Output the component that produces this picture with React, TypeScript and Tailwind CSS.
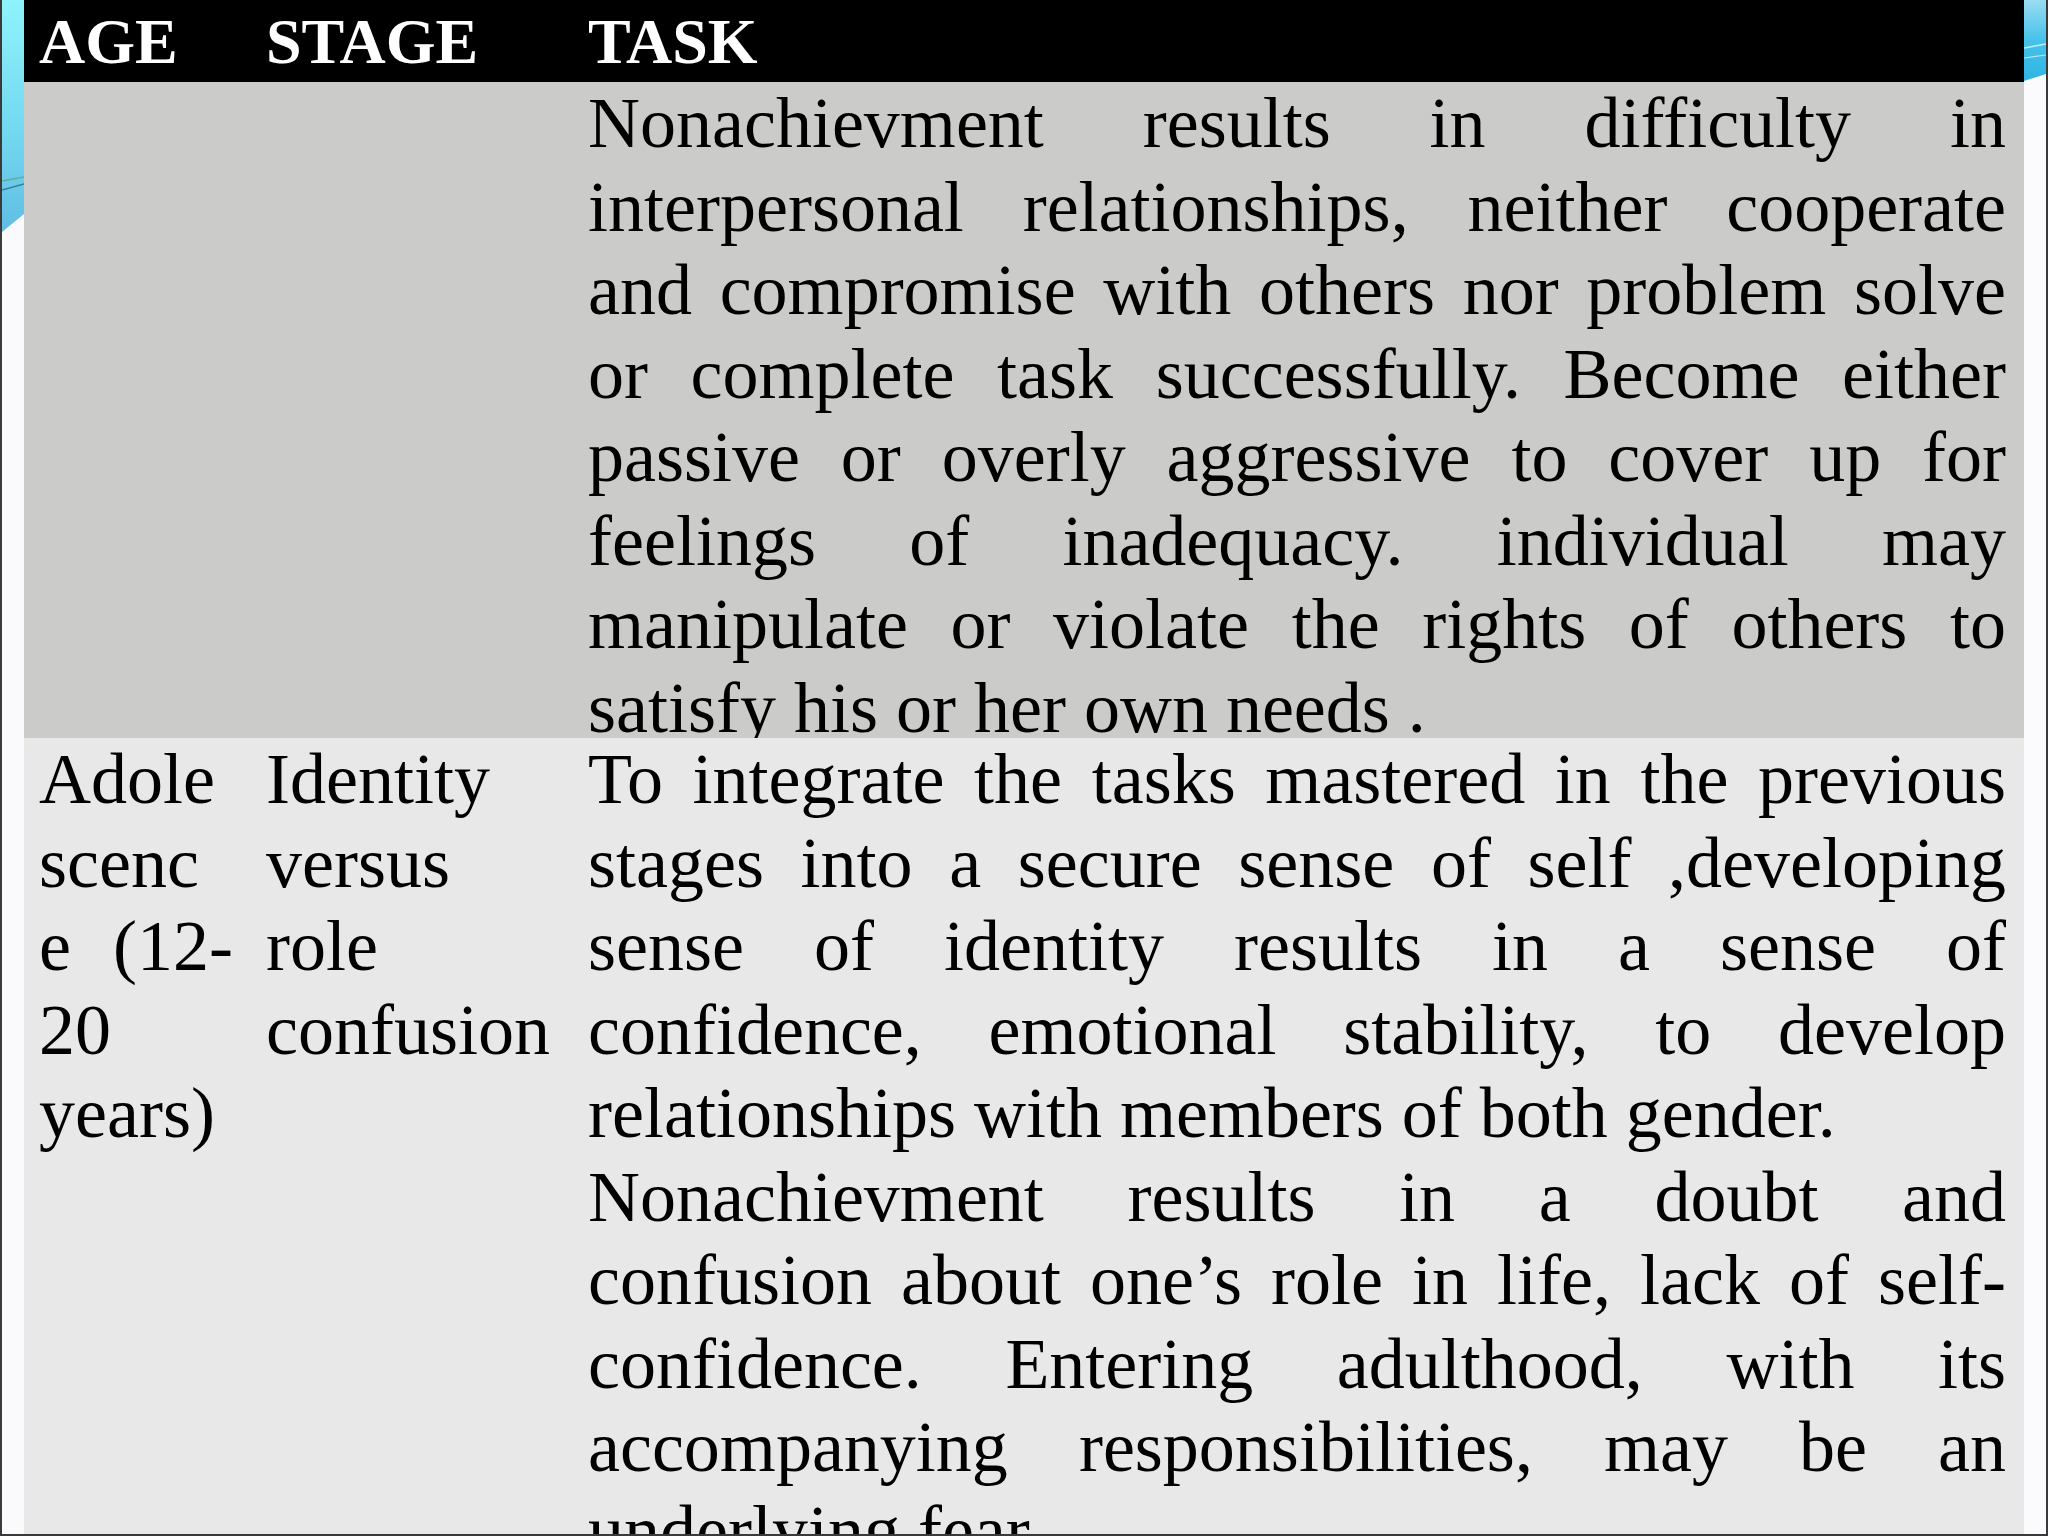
import React from "react";

const J = "text-justify [text-align-last:justify]";

type Line = { t: string; j?: boolean };

const row1Task: Line[] = [
  { t: "Nonachievment results in difficulty in", j: true },
  { t: "interpersonal relationships, neither cooperate", j: true },
  { t: "and compromise with others nor problem solve", j: true },
  { t: "or complete task successfully. Become either", j: true },
  { t: "passive or overly aggressive to cover up for", j: true },
  { t: "feelings of inadequacy. individual may", j: true },
  { t: "manipulate or violate the rights of others to", j: true },
  { t: "satisfy his or her own needs ." },
];

const row2Task: Line[] = [
  { t: "To integrate the tasks mastered in the previous", j: true },
  { t: "stages into  a secure sense of self ,developing", j: true },
  { t: "sense of identity results in a sense of", j: true },
  { t: "confidence, emotional stability, to develop", j: true },
  { t: "relationships with members of both gender." },
  { t: "Nonachievment results in a doubt and", j: true },
  { t: "confusion about one\u2019s role in life, lack of self-", j: true },
  { t: "confidence. Entering adulthood, with its", j: true },
  { t: "accompanying responsibilities, may be an", j: true },
  { t: "underlying fear." },
];

const row2Age: Line[] = [
  { t: "Adole" },
  { t: "scenc" },
  { t: "e (12-", j: true },
  { t: "20" },
  { t: "years)" },
];

const row2Stage: Line[] = [
  { t: "Identity" },
  { t: "versus" },
  { t: "role" },
  { t: "confusion" },
];

function Lines({ lines }: { lines: Line[] }) {
  return (
    <>
      {lines.map((l, i) => (
        <div key={i} className={l.j ? J : "text-left"}>
          {l.t}
        </div>
      ))}
    </>
  );
}

export default function App() {
  return (
    <div
      className="w-[2048px] h-[1536px] overflow-hidden flex bg-[#fafafc] border-l-2 border-r-2 border-b-2 border-[#3a3a3a]"
      style={{ fontFamily: '"Liberation Serif", "Times New Roman", serif' }}
    >
      {/* left decorative strip */}
      <div className="w-[22px] shrink-0 bg-[#fafafc]">
        <svg width="22" height="260" viewBox="0 0 22 260" className="block">
          <defs>
            <linearGradient id="lg" x1="0" y1="0" x2="0" y2="1">
              <stop offset="0" stopColor="#8ff3fc" />
              <stop offset="0.6" stopColor="#72d6ef" />
              <stop offset="1" stopColor="#5fbde3" />
            </linearGradient>
          </defs>
          <polygon points="0,0 22,0 22,214 0,232" fill="url(#lg)" />
          <line x1="0" y1="181" x2="22" y2="177" stroke="#5fae9c" strokeWidth="1.5" />
          <line x1="0" y1="190" x2="22" y2="184" stroke="#3c7d98" strokeWidth="1.5" />
        </svg>
      </div>

      {/* table */}
      <div className="w-[2000px] shrink-0 flex flex-col text-black">
        <div className="h-[82px] shrink-0 bg-black text-white font-bold text-[64px] leading-[82px] grid grid-cols-[227px_320px_1fr] pt-[1px]">
          <div className="pl-[15px]">AGE</div>
          <div className="pl-[15px]">STAGE</div>
          <div className="pl-[17px]">TASK</div>
        </div>

        <div className="h-[656px] shrink-0 overflow-hidden bg-[#cbcbc9] text-[72px] leading-[83.5px] grid grid-cols-[227px_320px_1fr]">
          <div className="pl-[15px] pr-[18px]" />
          <div className="pl-[15px] pr-[14px]" />
          <div className="pl-[17px] pr-[18px]">
            <Lines lines={row1Task} />
          </div>
        </div>

        <div className="flex-1 overflow-hidden bg-[#e8e8e8] text-[72px] leading-[83.5px] grid grid-cols-[227px_320px_1fr]">
          <div className="pl-[15px] pr-[18px]">
            <Lines lines={row2Age} />
          </div>
          <div className="pl-[15px] pr-[4px]">
            <Lines lines={row2Stage} />
          </div>
          <div className="pl-[17px] pr-[18px]">
            <Lines lines={row2Task} />
          </div>
        </div>
      </div>

      {/* right decorative strip */}
      <div className="w-[22px] shrink-0 bg-[#fbfbfd]">
        <svg width="22" height="100" viewBox="0 0 22 100" className="block">
          <defs>
            <linearGradient id="rg" x1="0" y1="0" x2="0" y2="1">
              <stop offset="0" stopColor="#9adcf2" />
              <stop offset="0.5" stopColor="#45c2ea" />
              <stop offset="1" stopColor="#2fb5e4" />
            </linearGradient>
          </defs>
          <polygon points="0,0 22,0 22,74 0,81" fill="url(#rg)" />
          <line x1="0" y1="48" x2="22" y2="44" stroke="#c6eef8" strokeWidth="1.5" />
          <line x1="0" y1="58" x2="22" y2="55" stroke="#b8e6f4" strokeWidth="1.2" />
        </svg>
      </div>
    </div>
  );
}
